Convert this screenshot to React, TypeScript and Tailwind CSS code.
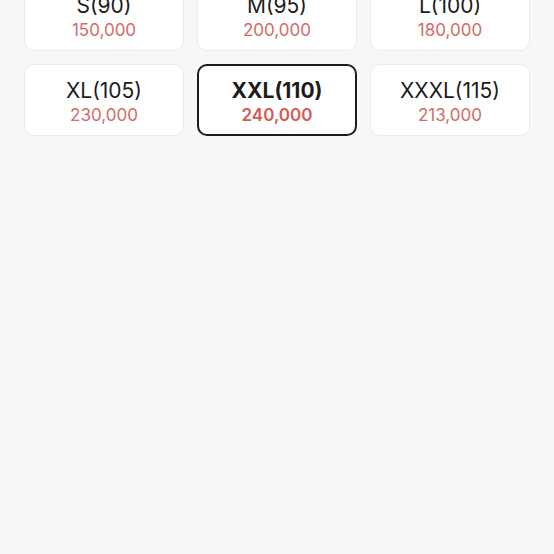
const sizes = [
  { label: "S(90)", price: "150,000" },
  { label: "M(95)", price: "200,000" },
  { label: "L(100)", price: "180,000" },
  { label: "XL(105)", price: "230,000" },
  { label: "XXL(110)", price: "240,000", selected: true },
  { label: "XXXL(115)", price: "213,000" },
];

export default function App() {
  return (
    <main className="min-h-[554px] bg-[#f7f7f7] overflow-hidden" style={{ fontFamily: "Inter, 'Noto Sans', sans-serif" }}>
      <div className="-mt-[21px] grid grid-cols-3 gap-[13px] px-6">
        {sizes.map((s) => (
          <button
            key={s.label}
            className={
              s.selected
                ? "h-[72px] rounded-[10px] border-2 border-[#1c1c1c] bg-white flex flex-col items-center justify-center pt-[3px]"
                : "h-[72px] rounded-[10px] border border-[#ebebeb] bg-white flex flex-col items-center justify-center pt-[3px]"
            }
          >
            <span
              className={
                s.selected
                  ? "text-[21px] leading-[26px] font-bold text-[#1c1c1c]"
                  : "text-[21px] leading-[26px] text-[#1c1c1c]"
              }
            >
              {s.label}
            </span>
            <span
              className={
                s.selected
                  ? "text-[17px] leading-[22px] font-semibold text-[#d45a55]"
                  : "text-[17px] leading-[22px] text-[#d26b68]"
              }
            >
              {s.price}
            </span>
          </button>
        ))}
      </div>
    </main>
  );
}
